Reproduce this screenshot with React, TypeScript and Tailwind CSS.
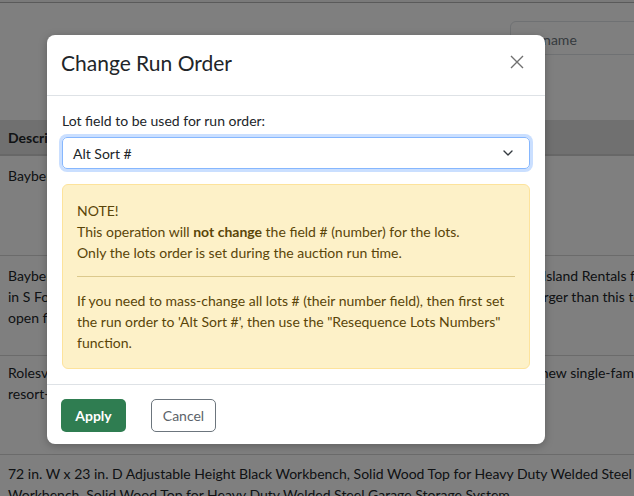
import { ChevronDown } from "lucide-react";

const rows = [
  {
    id: 1,
    lines: ["Bayberry Lane residential lot, 0.5 acres, utilities at road."],
    cls: "h-[100px] pt-[9px]",
  },
  {
    id: 2,
    lines: [
      "Bayberry Shores waterfront duplex lot near the sounds, shorter walking distance to the Island Rentals fast ferry",
      "in S Fork subdivision, cleared and surveyed lots. Buyer must also confirm that nothing larger than this to the",
      "open floor plan, room for a garage.",
    ],
    cls: "h-[100px] pt-[9px]",
  },
  {
    id: 3,
    lines: [
      "Rolesville corner parcel ready for constructions, close to the golf course and the resort, new single-family homes",
      "resort-style amenities.",
    ],
    cls: "h-[99px] pt-[6px]",
  },
  {
    id: 4,
    lines: [
      "72 in. W x 23 in. D Adjustable Height Black Workbench, Solid Wood Top for Heavy Duty Welded Steel Garage",
      "Workbench, Solid Wood Top for Heavy Duty Welded Steel Garage Storage System",
    ],
    cls: "h-[60px] pt-[8px]",
  },
];

function BackgroundPage() {
  return (
    <div className="w-[634px] h-[496px] overflow-hidden bg-white text-[14px] text-[#212529]">
      <div className="h-[3px] border-b border-[#b5b5b5] bg-[#f4f4f4]" />
      <div className="flex h-[117px] justify-end pt-[18px]">
        <div className="h-[34px] w-[130px] -mr-[6px] rounded-[6px] border border-[#dee2e6] px-[9px] py-[7px] text-[14px] text-[#6c757d]">
          Lot name
        </div>
      </div>
      <div className="flex h-[36px] items-center border-b-2 border-[#cfcfcf] bg-[#e0e0e0] px-[8px] font-bold">
        Description
      </div>
      {rows.map((r) => (
        <div key={r.id} className={`${r.cls} border-b border-[#d6d6d6] px-[8px] leading-[21px] whitespace-nowrap`}>
          {r.lines.map((l, i) => (
            <div key={i}>{l}</div>
          ))}
        </div>
      ))}
    </div>
  );
}

export default function App() {
  return (
    <div className="relative w-[634px] h-[496px] overflow-hidden font-['Lato','Liberation_Sans',sans-serif]">
      <BackgroundPage />
      <div className="absolute inset-0 bg-black/50" />

      <div className="absolute left-[47px] top-[35px] w-[498px] rounded-[8px] bg-white text-[#212529] shadow-[0_2px_8px_rgba(0,0,0,0.25)]">
        <div className="flex h-[61px] items-center justify-between border-b border-[#dee2e6] pl-[14px] pr-[20px] pb-[6px]">
          <h2 className="text-[21px] leading-none">Change Run Order</h2>
          <svg width="16" height="16" viewBox="0 0 16 16" className="text-[#707070]">
            <path d="M2 2 L14 14 M14 2 L2 14" stroke="currentColor" strokeWidth="1.4" fill="none" />
          </svg>
        </div>

        <div className="px-[15px] pt-[15px] pb-[15px]">
          <div className="text-[14px] leading-[20px]">Lot field to be used for run order:</div>
          <div className="mt-[6px] flex h-[32px] items-center justify-between rounded-[5px] border border-[#86b7fe] pl-[10px] pr-[13px] text-[14px] shadow-[0_0_0_3px_rgba(13,110,253,0.22)]">
            <span>Alt Sort #</span>
            <ChevronDown size={16} strokeWidth={2} className="text-[#343a40]" />
          </div>

          <div className="mt-[15px] rounded-[6px] border border-[#fde39c] bg-[#fdf1c8] px-[14px] py-[15px] text-[14px] leading-[21px] text-[#5a4508]">
            <div>NOTE!</div>
            <div>
              This operation will <b>not change</b> the field # (number) for the lots.
            </div>
            <div>Only the lots order is set during the auction run time.</div>
            <div className="my-[13px] border-t border-[#dcc98c]" />
            <div>
              If you need to mass-change all lots # (their number field), then first set the run order to 'Alt Sort #',
              then use the "Resequence Lots Numbers" function.
            </div>
          </div>
        </div>

        <div className="flex items-center gap-[25px] border-t border-[#dee2e6] px-[14px] pt-[14px] pb-[12px]">
          <button className="h-[33px] w-[65px] rounded-[5px] bg-[#2f7d51] text-[14px] font-bold text-white">Apply</button>
          <button className="h-[33px] w-[65px] rounded-[5px] border border-[#6c757d] text-[14px] text-[#5c636a]">Cancel</button>
        </div>
      </div>
    </div>
  );
}
